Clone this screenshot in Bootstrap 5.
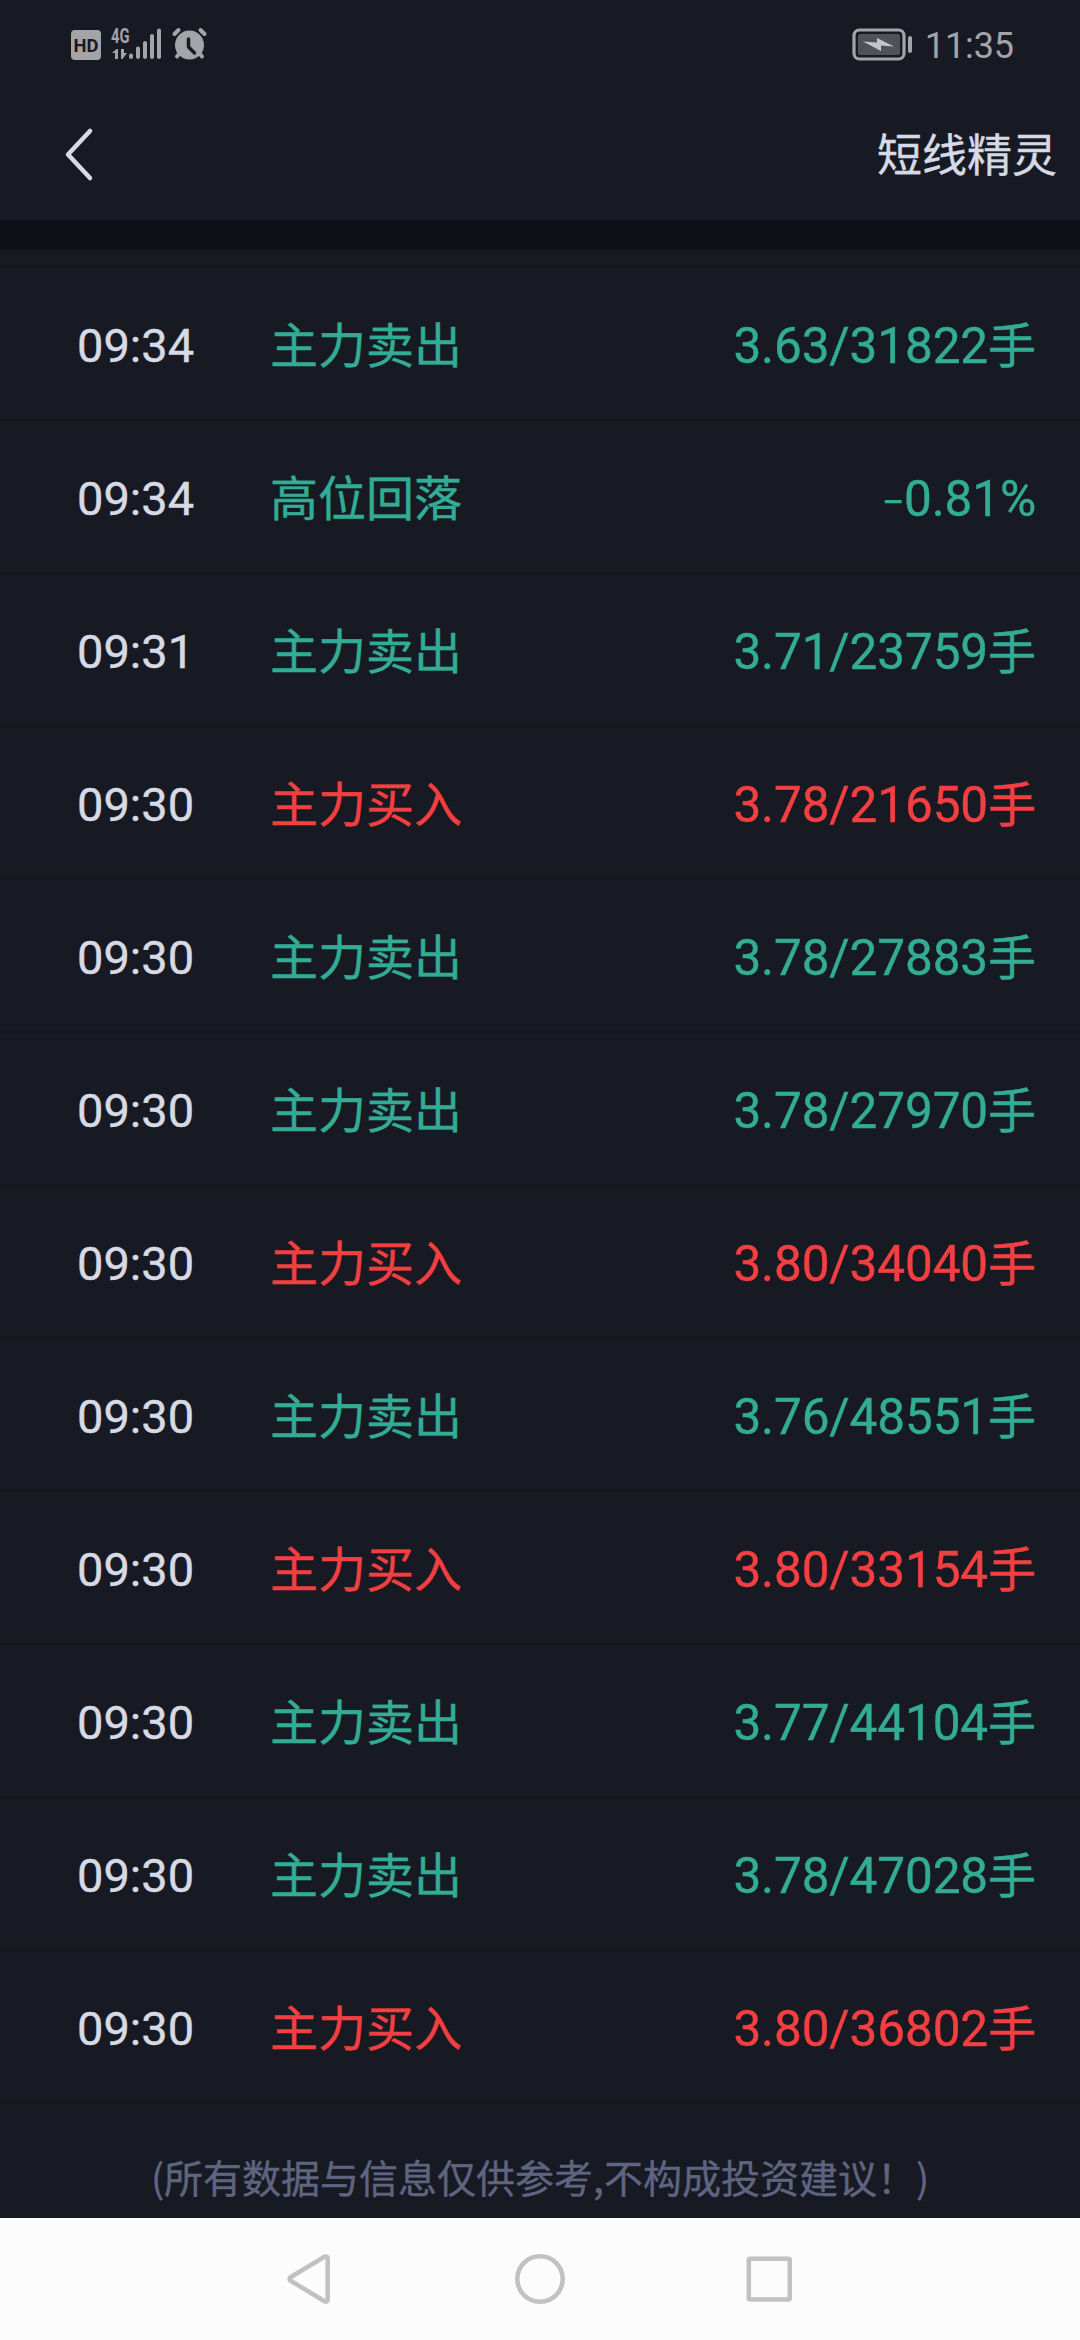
<!DOCTYPE html>
<html lang="zh-CN">
<head>
<meta charset="utf-8">
<meta name="viewport" content="width=device-width, initial-scale=1">
<title>短线精灵</title>
<link href="https://cdn.jsdelivr.net/npm/bootstrap@5.3.0/dist/css/bootstrap.min.css" rel="stylesheet">
<style>
  body { background: #171a22; color: #d7dae4; font-family: Roboto, "Noto Sans CJK SC", sans-serif; min-height: 2340px; overflow-x: hidden; -webkit-text-stroke: .4px; }
  svg { display: block; -webkit-text-stroke: 0; }
  .zh { font-family: "Noto Sans CJK SC", sans-serif; }
  .status-bar { height: 90px; color: #a3a4a8; }
  .clock { font-size: 36px; line-height: 42px; padding: 2px 66px 0 0; letter-spacing: -.1px; -webkit-text-stroke: 0; }
  .battery { margin-right: 13px; }
  .title-bar { height: 130px; padding: 0 23px 0 60px; }
  .page-title { font-size: 45px; line-height: 60px; padding-bottom: 4px; }
  .divider { height: 30px; background: #0d1015; }
  .feed { padding-top: 16px; }
  .feed-item { height: 153px; border-top: 2px solid #13161d; padding: 0 44px 0 77px; }
  .feed-end { border-top: 2px solid #13161d; height: 116px; }
  .item-time { font-size: 47px; line-height: 60px; width: 193px; padding-top: 5px; }
  .item-label { font-size: 48px; line-height: 70px; padding-bottom: 3px; }
  .item-value { font-size: 49.5px; line-height: 60px; padding-top: 5px; letter-spacing: -.15px; }
  .item-value .zh { font-size: 48px; line-height: 1; letter-spacing: 0; }
  .sign { font-size: 40px; line-height: 1; letter-spacing: -1px; }
  .sell { color: #32ac94; }
  .buy { color: #f23f41; }
  .disclaimer { font-size: 39px; line-height: 56px; padding-top: 44px; color: #5f6480; }
  .nav-keys { height: 122px; background: #fcfcfc; }
</style>
</head>
<body class="d-flex flex-column">
<div class="status-bar d-flex justify-content-between">
  <svg width="220" height="90" fill="currentColor" font-family="Roboto, sans-serif">
    <rect x="71" y="30" width="30" height="30" rx="4"/>
    <text x="86" y="51.7" text-anchor="middle" font-size="19" font-weight="700" textLength="25" lengthAdjust="spacingAndGlyphs" fill="#171a22">HD</text>
    <text x="111" y="42.500" font-size="19.500" font-weight="700" textLength="18.500" lengthAdjust="spacingAndGlyphs">4G</text>
    <path d="M112 53l4.500-4H118v10h-3v-6zM121 49h3v4h3l-4.500 6H121z"/>
    <g stroke="currentColor" stroke-width="4" stroke-linecap="round">
      <path d="M131 55.500V57M138 48.500V57M145 43V57M152 36V57M159 30.500V57"/>
    </g>
    <circle cx="189.500" cy="45" r="14.500"/>
    <g stroke="currentColor" stroke-width="4" stroke-linecap="round"><path d="M174.500 34l4-4M200.500 30l4 4M179 54l-2 2.500M200 54l2 2.500"/></g>
    <path d="M188.500 39v8l6 6" fill="none" stroke="#171a22" stroke-width="3.500" stroke-linecap="round" stroke-linejoin="round"/>
  </svg>
  <div class="d-flex align-items-center">
    <svg class="battery" width="60" height="90" viewBox="851 0 60 90">
      <rect x="853" y="30" width="50" height="29" rx="5.500" fill="none" stroke="#a3a4a8" stroke-width="3.200"/>
      <rect x="857" y="34" width="42" height="21" rx="2" fill="#4f5259"/>
      <path d="M862 41.500l14 1V38l17 8.500-13-1V51z" fill="#c4c5c8"/>
      <rect x="907" y="36" width="4" height="17" rx="2" fill="#a3a4a8"/>
    </svg>
    <span class="clock">11:35</span>
  </div>
</div>
<header class="title-bar d-flex align-items-center justify-content-between">
  <svg width="40" height="60" viewBox="60 125 40 60" fill="none" stroke="#d7dae4" stroke-width="4.500" stroke-linecap="round" stroke-linejoin="round"><path d="M90 131L68 154.500 90 178"/></svg>
  <h1 class="page-title zh fw-normal m-0">短线精灵</h1>
</header>
<div class="divider"></div>
<main class="feed flex-grow-1">
  <div class="feed-item d-flex align-items-center"><span class="item-time">09:34</span><span class="item-label zh sell">主力卖出</span><span class="item-value sell ms-auto">3.63/31822<span class="zh">手</span></span></div>
  <div class="feed-item d-flex align-items-center"><span class="item-time">09:34</span><span class="item-label zh sell">高位回落</span><span class="item-value sell ms-auto"><span class="sign">−</span>0.81%</span></div>
  <div class="feed-item d-flex align-items-center"><span class="item-time">09:31</span><span class="item-label zh sell">主力卖出</span><span class="item-value sell ms-auto">3.71/23759<span class="zh">手</span></span></div>
  <div class="feed-item d-flex align-items-center"><span class="item-time">09:30</span><span class="item-label zh buy">主力买入</span><span class="item-value buy ms-auto">3.78/21650<span class="zh">手</span></span></div>
  <div class="feed-item d-flex align-items-center"><span class="item-time">09:30</span><span class="item-label zh sell">主力卖出</span><span class="item-value sell ms-auto">3.78/27883<span class="zh">手</span></span></div>
  <div class="feed-item d-flex align-items-center"><span class="item-time">09:30</span><span class="item-label zh sell">主力卖出</span><span class="item-value sell ms-auto">3.78/27970<span class="zh">手</span></span></div>
  <div class="feed-item d-flex align-items-center"><span class="item-time">09:30</span><span class="item-label zh buy">主力买入</span><span class="item-value buy ms-auto">3.80/34040<span class="zh">手</span></span></div>
  <div class="feed-item d-flex align-items-center"><span class="item-time">09:30</span><span class="item-label zh sell">主力卖出</span><span class="item-value sell ms-auto">3.76/48551<span class="zh">手</span></span></div>
  <div class="feed-item d-flex align-items-center"><span class="item-time">09:30</span><span class="item-label zh buy">主力买入</span><span class="item-value buy ms-auto">3.80/33154<span class="zh">手</span></span></div>
  <div class="feed-item d-flex align-items-center"><span class="item-time">09:30</span><span class="item-label zh sell">主力卖出</span><span class="item-value sell ms-auto">3.77/44104<span class="zh">手</span></span></div>
  <div class="feed-item d-flex align-items-center"><span class="item-time">09:30</span><span class="item-label zh sell">主力卖出</span><span class="item-value sell ms-auto">3.78/47028<span class="zh">手</span></span></div>
  <div class="feed-item d-flex align-items-center"><span class="item-time">09:30</span><span class="item-label zh buy">主力买入</span><span class="item-value buy ms-auto">3.80/36802<span class="zh">手</span></span></div>
  <div class="feed-end"><p class="disclaimer zh text-center text-nowrap m-0">(所有数据与信息仅供参考,不构成投资建议！)</p></div>
</main>
<nav class="nav-keys d-flex justify-content-center">
  <svg width="560" height="122" viewBox="260 2218 560 122" fill="none" stroke="#c1c1c1" stroke-width="4.500" stroke-linejoin="round">
    <path d="M290.500 2277.300L324.500 2256.800Q327.700 2255.500 327.700 2259V2299Q327.700 2302.500 324.500 2301.200L290.500 2280.700Q288.500 2279 290.500 2277.300Z"/>
    <circle cx="540" cy="2279" r="22.700"/>
    <rect x="748.800" y="2258.700" width="41" height="40.800" rx="1.500"/>
  </svg>
</nav>
<script src="https://cdn.jsdelivr.net/npm/bootstrap@5.3.0/dist/js/bootstrap.bundle.min.js"></script>
</body>
</html>
